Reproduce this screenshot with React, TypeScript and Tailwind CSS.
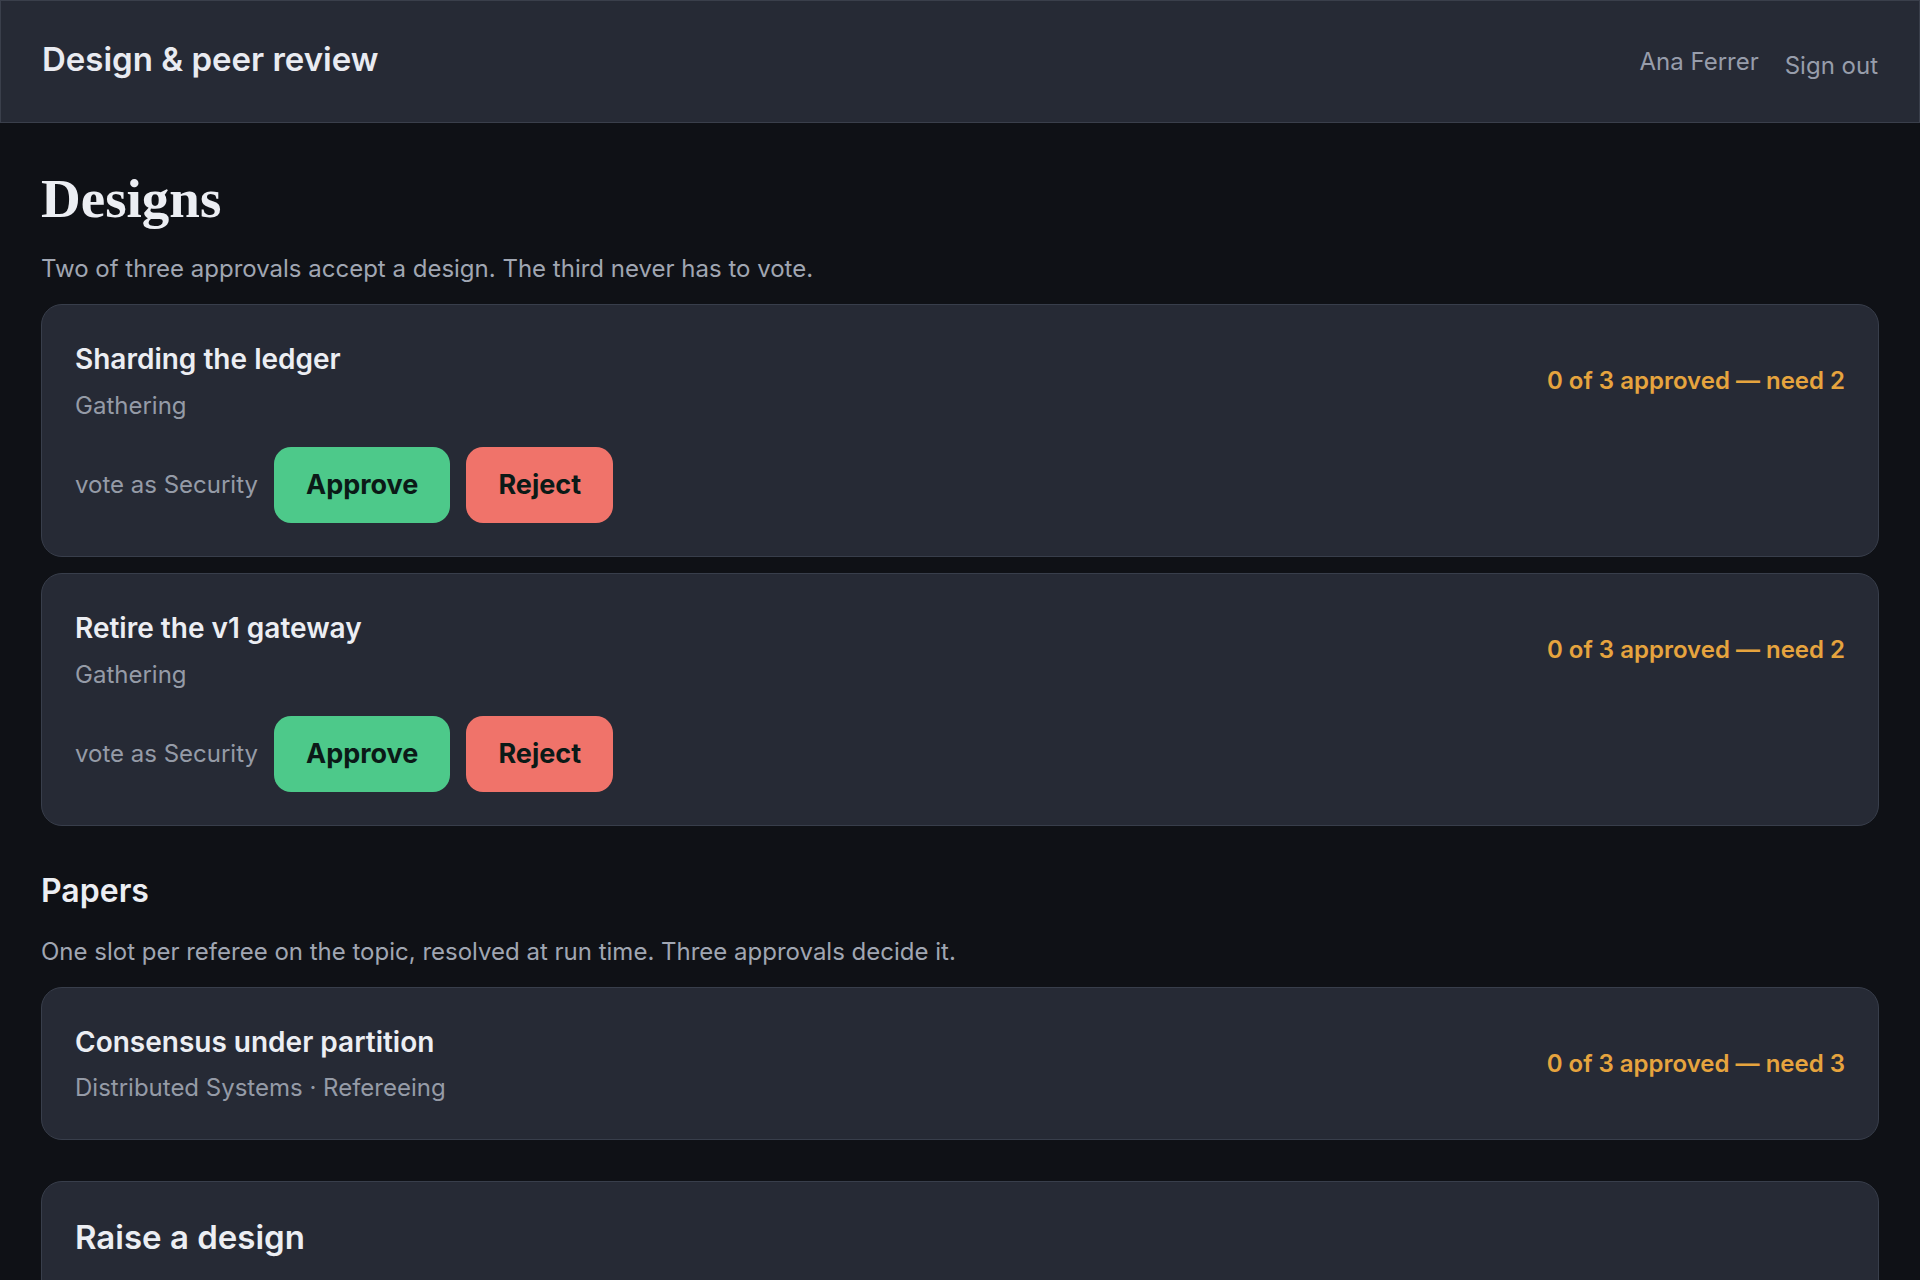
import React from "react";

type Design = {
  title: string;
  state: string;
  tally: string;
};

const designs: Design[] = [
  { title: "Sharding the ledger", state: "Gathering", tally: "0 of 3 approved — need 2" },
  { title: "Retire the v1 gateway", state: "Gathering", tally: "0 of 3 approved — need 2" },
];

const Card = ({ children }: { children: React.ReactNode }) => (
  <div className="rounded-[21px] border-[1.5px] border-[#383e4b] bg-[#262a35] p-[33px]">
    {children}
  </div>
);

const Tally = ({ text }: { text: string }) => (
  <span className="text-[24px] leading-[36px] font-semibold text-[#e6a43e]">{text}</span>
);

const DesignCard = ({ design }: { design: Design }) => (
  <Card>
    <div className="flex items-center justify-between">
      <div className="flex flex-col">
        <h3 className="text-[28px] leading-[42px] font-semibold text-[#eceef3]">{design.title}</h3>
        <p className="mt-[8px] text-[24px] leading-[36px] text-[#959ba7]">{design.state}</p>
      </div>
      <Tally text={design.tally} />
    </div>
    <div className="mt-[23px] flex items-center gap-[16px]">
      <span className="text-[24px] leading-[36px] text-[#959ba7]">vote as Security</span>
      <button className="rounded-[17px] bg-[#4dc98a] px-[32px] py-[17px] text-[27px] leading-[42px] font-bold text-[#0b1a17]">
        Approve
      </button>
      <button className="rounded-[17px] bg-[#f0736a] px-[32px] py-[17px] text-[27px] leading-[42px] font-bold text-[#0b1a17]">
        Reject
      </button>
    </div>
  </Card>
);

export default function App() {
  return (
    <div className="min-h-screen bg-[#0f1116] font-['Inter','Noto_Sans',sans-serif] text-[#eceef3]">
      <header className="flex h-[123px] items-center justify-between border-[1.5px] border-[#3a3f4b] bg-[#262a35] px-[41px]">
        <h1 className="mb-[5px] text-[33px] leading-[48px] font-semibold text-[#e9ebf1]">Design &amp; peer review</h1>
        <div className="flex items-center gap-[26px]">
          <span className="text-[24px] leading-[36px] text-[#979dab]">Ana Ferrer</span>
          <button className="pt-[8px] text-[24px] leading-[36px] text-[#979dab]">Sign out</button>
        </div>
      </header>

      <main className="px-[41px] pt-[43px] pb-[60px]">
        <h2 className="font-['Liberation_Serif','DejaVu_Serif',serif] text-[55px] leading-[1.2] font-bold text-[#eceef3]">
          Designs
        </h2>
        <p className="mt-[19px] text-[24px] leading-[36px] text-[#a0a6b2]">
          Two of three approvals accept a design. The third never has to vote.
        </p>
        <div className="mt-[17px] flex flex-col gap-[16px]">
          {designs.map((d) => (
            <DesignCard key={d.title} design={d} />
          ))}
        </div>

        <h2 className="mt-[42px] text-[32px] leading-[45px] font-semibold text-[#eceef3]">Papers</h2>
        <p className="mt-[21px] text-[24px] leading-[36px] text-[#a0a6b2]">
          One slot per referee on the topic, resolved at run time. Three approvals decide it.
        </p>
        <div className="mt-[17px]">
          <Card>
            <div className="flex items-center justify-between">
              <div className="flex flex-col">
                <h3 className="text-[28px] leading-[42px] font-semibold text-[#eceef3]">Consensus under partition</h3>
                <p className="mt-[7px] text-[24px] leading-[36px] text-[#959ba7]">Distributed Systems · Refereeing</p>
              </div>
              <Tally text="0 of 3 approved — need 3" />
            </div>
          </Card>
        </div>

        <div className="mt-[41px]">
          <Card>
            <h2 className="text-[33px] leading-[45px] font-semibold text-[#eceef3]">Raise a design</h2>
            <div className="mt-[24px] flex flex-col gap-[12px]">
              <label className="text-[24px] leading-[36px] text-[#959ba7]">Title</label>
              <input
                className="rounded-[12px] border-[1.5px] border-[#383e4b] bg-[#1a1d25] px-[18px] py-[12px] text-[24px] text-[#eceef3]"
                placeholder="What should change?"
              />
            </div>
          </Card>
        </div>
      </main>
    </div>
  );
}
